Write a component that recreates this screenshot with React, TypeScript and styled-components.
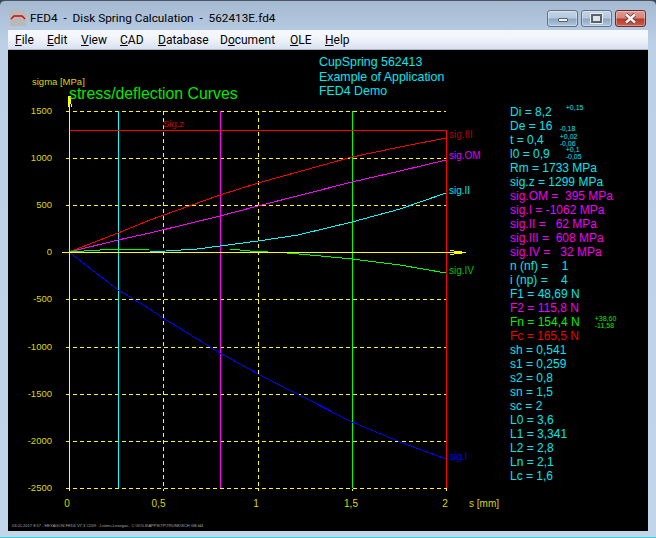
import React from 'react'
import styled, { createGlobalStyle } from 'styled-components'

const GlobalStyle = createGlobalStyle`
  html, body {
    margin: 0;
    padding: 0;
    width: 656px;
    height: 538px;
    overflow: hidden;
    background: #3a4650;
  }
`

const Window = styled.div`
  width: 656px;
  height: 538px;
  box-sizing: border-box;
  display: flex;
  flex-direction: column;
  border-radius: 5px 5px 0 0;
  border-top: 1px solid #4a5560;
  border-bottom: 1px solid #35d0e8;
  padding: 0 8px 6px;
  background: linear-gradient(180deg, #a5bad2 0%, #bcd0e6 8%, #c2d6ea 100%);
`

const TitleBar = styled.div`
  height: 29px;
  flex: none;
  box-sizing: border-box;
  padding-top: 5px;
  display: flex;
  align-items: center;
  font-family: Roboto, sans-serif;
  font-size: 11.8px;
  color: #000;
`

const AppIcon = styled.svg`
  width: 16px;
  height: 16px;
  margin: 0 4px 0 2px;
  flex: none;
`

const Title = styled.div`
  white-space: pre;
  flex: 1;
`

const WindowButtons = styled.div`
  display: flex;
  gap: 3px;
  margin-right: 2px;
`

const WindowButton = styled.div<{ $close?: boolean }>`
  width: 31px;
  height: 17px;
  box-sizing: border-box;
  border: 1px solid ${p => (p.$close ? '#6e2a30' : '#5e7288')};
  border-radius: 3px;
  display: flex;
  align-items: center;
  justify-content: center;
  background: ${p =>
    p.$close
      ? 'linear-gradient(180deg, #dc9a90 0%, #d8867a 45%, #b83a2a 55%, #c8604c 100%)'
      : 'linear-gradient(180deg, #c4d4e6 0%, #b4c8de 45%, #8ea8c4 55%, #b0c6dc 100%)'};
  box-shadow: inset 0 0 0 1px rgba(255, 255, 255, 0.35);
`

const MinGlyph = styled.div`
  width: 10px;
  height: 4px;
  margin-top: 3px;
  box-sizing: border-box;
  background: #f0f2f6;
  border: 1px solid #59636e;
  border-radius: 1px;
`

const MaxGlyph = styled.div`
  width: 11px;
  height: 9px;
  box-sizing: border-box;
  background: #dfe5ec;
  border: 2px solid #59636e;
  outline: 1px solid #e8edf3;
`

const MenuBar = styled.div`
  height: 20px;
  flex: none;
  display: flex;
  align-items: center;
  padding-left: 7px;
  box-sizing: border-box;
  border-bottom: 1px solid #a9b4c4;
  background: linear-gradient(180deg, #f6f8fc 0%, #f2f5fb 40%, #d9e1f0 100%);
  font-family: Roboto, sans-serif;
  font-size: 12px;
  color: #000;
`

const MenuItem = styled.div<{ $width: number }>`
  width: ${p => p.$width}px;
  flex: none;
  white-space: pre;
  span {
    text-decoration: underline;
  }
`

const Canvas = styled.div`
  flex: 1;
  display: flex;
  min-height: 0;
  background: #000;
`

const Chart = styled.svg`
  width: 502px;
  height: 480px;
  flex: none;
  display: block;
  font-family: 'Liberation Sans', Arial, sans-serif;
  white-space: pre;
`

const Panel = styled.div`
  flex: 1;
  padding-top: 55px;
  display: flex;
  flex-direction: column;
  font-family: 'Liberation Sans', Arial, sans-serif;
  font-size: 12px;
`

const Row = styled.div<{ $color: string }>`
  height: 14px;
  line-height: 14px;
  display: flex;
  align-items: center;
  white-space: pre;
  color: ${p => p.$color};
`

const Tolerance = styled.div<{ $left: number; $shift?: number }>`
  margin-left: ${p => p.$left}px;
  display: flex;
  flex-direction: column;
  font-size: 7px;
  line-height: 7px;
  transform: translateY(${p => p.$shift ?? 0}px);
`

const CYAN = '#00e6f0'
const MAGENTA = '#f000f0'
const GREEN = '#00f000'
const RED = '#f00000'

type Spec = {
  text: string
  color: string
  tol?: string[]
  left?: number
  shift?: number
}

const rows: Spec[] = [
  { text: 'Di = 8,2', color: CYAN, tol: ['+0,15'], left: 14, shift: -5 },
  { text: 'De = 16', color: CYAN, tol: ['-0,18'], left: 7, shift: 2 },
  { text: 't = 0,4', color: CYAN, tol: ['+0,02', '-0,06'], left: 16 },
  { text: 'l0 = 0,9', color: CYAN, tol: ['+0,1', '-0,05'], left: 16, shift: -1 },
  { text: 'Rm = 1733 MPa', color: CYAN },
  { text: 'sig.z = 1299 MPa', color: CYAN },
  { text: 'sig.OM =  395 MPa', color: MAGENTA },
  { text: 'sig.I = -1062 MPa', color: MAGENTA },
  { text: 'sig.II =   62 MPa', color: MAGENTA },
  { text: 'sig.III =  608 MPa', color: MAGENTA },
  { text: 'sig.IV =   32 MPa', color: MAGENTA },
  { text: 'n (nf) =    1', color: CYAN },
  { text: 'i (np) =    4', color: CYAN },
  { text: 'F1 = 48,69 N', color: CYAN },
  { text: 'F2 = 115,8 N', color: MAGENTA },
  { text: 'Fn = 154,4 N', color: GREEN, tol: ['+38,60', '-11,58'], left: 15 },
  { text: 'Fc = 165,5 N', color: RED },
  { text: 'sh = 0,541', color: CYAN },
  { text: 's1 = 0,259', color: CYAN },
  { text: 's2 = 0,8', color: CYAN },
  { text: 'sn = 1,5', color: CYAN },
  { text: 'sc = 2', color: CYAN },
  { text: 'L0 = 3,6', color: CYAN },
  { text: 'L1 = 3,341', color: CYAN },
  { text: 'L2 = 2,8', color: CYAN },
  { text: 'Ln = 2,1', color: CYAN },
  { text: 'Lc = 1,6', color: CYAN },
]

const menu: { before: string; key: string; after: string; width: number }[] = [
  { before: '', key: 'F', after: 'ile', width: 32 },
  { before: '', key: 'E', after: 'dit', width: 34 },
  { before: '', key: 'V', after: 'iew', width: 39 },
  { before: '', key: 'C', after: 'AD', width: 38 },
  { before: '', key: 'D', after: 'atabase', width: 62 },
  { before: 'D', key: 'o', after: 'cument', width: 70 },
  { before: '', key: 'O', after: 'LE', width: 35 },
  { before: '', key: 'H', after: 'elp', width: 30 },
]

const gridY = [111, 158, 205, 252, 299, 347, 394, 441, 488]
const yLabels = ['1500', '1000', '500', '0', '-500', '-1000', '-1500', '-2000', '-2500']
const gridX = [163, 258, 352]

const curves = [
  { color: '#ff0000', points: '69,252 118,233 150,220 220,195 258,183 305,170 352,157 400,147 446,138' },
  { color: '#ff00ff', points: '69,252 118,240 150,233 220,216 258,206 305,194 352,182 400,171 446,160' },
  { color: '#00ffff', points: '69,252 118,253 150,252 197,249 220,246 258,241 298,235 352,222 400,209 446,193' },
  { color: '#00ff00', points: '69,252 100,250 150,249 230,249 250,251 268,252 287,253 310,255 352,259 400,265 446,273' },
  { color: '#0000ff', points: '69,252 118,290 150,309 163,318 220,353 258,374 297,394 352,422 400,442 446,459' },
]

const curveLabels = [
  { text: 'sig.III', y: 138, color: '#b00000' },
  { text: 'sig.OM', y: 159, color: '#e000f0' },
  { text: 'sig.II', y: 194, color: '#00e0e0' },
  { text: 'sig.IV', y: 274, color: '#00c000' },
  { text: 'sig.I', y: 460, color: '#0000e0' },
]

export default function App() {
  return (
    <>
      <GlobalStyle />
      <Window>
        <TitleBar>
          <AppIcon viewBox="0 0 16 16">
            <rect width="16" height="16" fill="#b9b9b9" />
            <path d="M1 9 L4 6 H12 L15 9" fill="none" stroke="#e00000" strokeWidth="1.4" />
          </AppIcon>
          <Title>FED4  -  Disk Spring Calculation  -  562413E.fd4</Title>
          <WindowButtons>
            <WindowButton>
              <MinGlyph />
            </WindowButton>
            <WindowButton>
              <MaxGlyph />
            </WindowButton>
            <WindowButton $close>
              <svg width="13" height="11" viewBox="0 0 13 11">
                <path d="M2 1.5 L11 9.5 M11 1.5 L2 9.5" stroke="#5a3a3a" strokeWidth="4" />
                <path d="M2 1.5 L11 9.5 M11 1.5 L2 9.5" stroke="#f4f4f4" strokeWidth="2.4" />
              </svg>
            </WindowButton>
          </WindowButtons>
        </TitleBar>
        <MenuBar>
          {menu.map(m => (
            <MenuItem key={m.key + m.after} $width={m.width}>
              {m.before}
              <span>{m.key}</span>
              {m.after}
            </MenuItem>
          ))}
        </MenuBar>
        <Canvas>
          <Chart viewBox="8 50 502 480">
            <g shapeRendering="crispEdges">
              {gridY.map(y => (
                <line key={y} x1="66" x2="446" y1={y + 0.5} y2={y + 0.5} stroke="#ffff00" strokeDasharray="4 3" />
              ))}
              {gridX.map(x => (
                <line key={x} x1={x + 0.5} x2={x + 0.5} y1="111" y2="491" stroke="#ffff00" strokeDasharray="4 3" />
              ))}
              <line x1="118.5" x2="118.5" y1="111" y2="488" stroke="#00ffff" />
              <line x1="220.5" x2="220.5" y1="111" y2="488" stroke="#ff00ff" />
              <line x1="352.5" x2="352.5" y1="111" y2="488" stroke="#00ff00" />
              <line x1="69" x2="446" y1="130.5" y2="130.5" stroke="#ff0000" />
              <line x1="446.5" x2="446.5" y1="130" y2="488" stroke="#ff0000" />
              <line x1="446.5" x2="446.5" y1="488" y2="491" stroke="#ffff00" />
              {curves.map(c => (
                <polyline key={c.color} points={c.points} fill="none" stroke={c.color} />
              ))}
              <line x1="69.5" x2="69.5" y1="100" y2="491" stroke="#ffff00" />
              <line x1="62" x2="466" y1="252.5" y2="252.5" stroke="#ffff00" />
              <rect x="68" y="96" width="3" height="8" fill="#ffff00" />
              <path d="M68.5 104v3M71.5 104v3" stroke="#ffff00" />
              <rect x="454" y="251" width="8" height="3" fill="#ffff00" />
              <path d="M450 250.5h4M450 254.5h4" stroke="#ffff00" />
            </g>

            <text x="32" y="85" fontSize="9.5" fill="#d8d800">sigma [MPa]</text>
            <text x="69" y="99" fontSize="15.8" fill="#00e800">stress/deflection Curves</text>
            <text x="163" y="127" fontSize="9.5" fill="#d00000">Sig.z</text>

            <g fontSize="12.4" fill="#00e6f0">
              <text x="319" y="66">CupSpring  562413</text>
              <text x="319" y="81">Example of Application</text>
              <text x="319" y="95">FED4 Demo</text>
            </g>

            <g fontSize="9.5" fill="#d8d800" textAnchor="end">
              {yLabels.map((label, i) => (
                <text key={label} x="52" y={gridY[i] + 3}>{label}</text>
              ))}
            </g>

            <g fontSize="10" fill="#d8d800" textAnchor="middle">
              <text x="67" y="507">0</text>
              <text x="158.5" y="507">0,5</text>
              <text x="256" y="507">1</text>
              <text x="351" y="507">1,5</text>
              <text x="445" y="507">2</text>
            </g>
            <text x="469" y="507" fontSize="10" fill="#d8d800">s [mm]</text>

            <g fontSize="10">
              {curveLabels.map(l => (
                <text key={l.text} x="449" y={l.y} fill={l.color}>{l.text}</text>
              ))}
            </g>

            <text x="12" y="527" fontSize="4" fill="#a8a8a8">
              03.01.2017 8:57 - HEXAGON FED4 V7.3 #2/09 - Listen+Lesegas - C:\VOLS\APPS\TP\TRUNK\SCH GB.fd4
            </text>
          </Chart>
          <Panel>
            {rows.map(r => (
              <Row key={r.text} $color={r.color}>
                {r.text}
                {r.tol && (
                  <Tolerance $left={r.left ?? 0} $shift={r.shift}>
                    {r.tol.map(t => (
                      <span key={t}>{t}</span>
                    ))}
                  </Tolerance>
                )}
              </Row>
            ))}
          </Panel>
        </Canvas>
      </Window>
    </>
  )
}
